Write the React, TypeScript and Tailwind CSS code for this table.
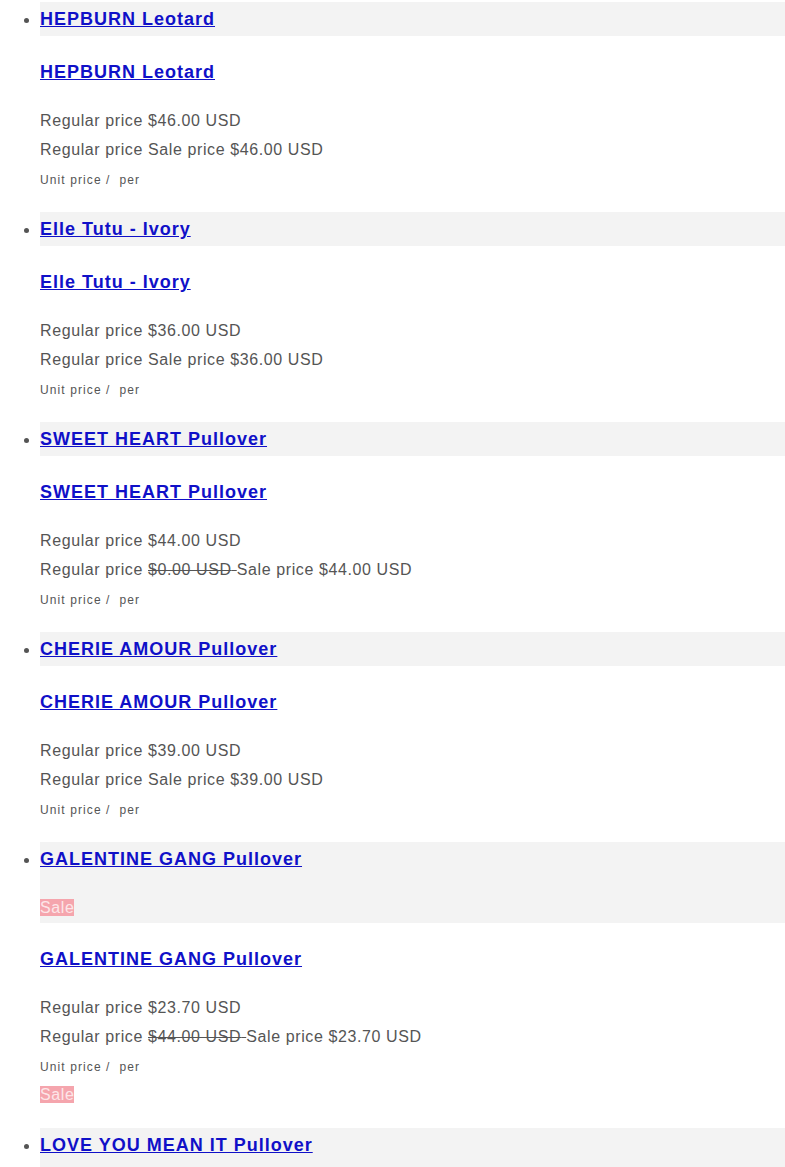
import React from 'react';

type Product = {
  name: string;
  price: string;
  compare?: string;
  sale?: boolean;
};

const products: Product[] = [
  { name: 'HEPBURN Leotard', price: '$46.00 USD' },
  { name: 'Elle Tutu - Ivory', price: '$36.00 USD' },
  { name: 'SWEET HEART Pullover', price: '$44.00 USD', compare: '$0.00 USD' },
  { name: 'CHERIE AMOUR Pullover', price: '$39.00 USD' },
  { name: 'GALENTINE GANG Pullover', price: '$23.70 USD', compare: '$44.00 USD', sale: true },
  { name: 'LOVE YOU MEAN IT Pullover', price: '$23.70 USD', compare: '$44.00 USD', sale: true },
];

const SaleBadge = () => (
  <span className="bg-[#f5a5ad] text-[#fde6e8]">Sale</span>
);

const ProductCard = ({ product }: { product: Product }) => {
  return (
    <li className={product.sale ? 'pb-[24px]' : 'pb-[23px]'}>
      <div className={product.sale ? 'bg-[#f3f3f3] pt-[5px] pb-[6px]' : 'bg-[#f3f3f3] pt-[5px] pb-[5px]'}>
        <h3 className="text-[18px] leading-[24px] font-bold tracking-[1px]">
          <a href="#" className="text-[#1010c8] underline">{product.name}</a>
        </h3>
        {product.sale && (
          <div className="mt-[28px] text-[16px] leading-[18px]">
            <SaleBadge />
          </div>
        )}
      </div>

      <h3 className="mt-[24px] text-[18px] leading-[24px] font-bold tracking-[1px]">
        <a href="#" className="text-[#1010c8] underline">{product.name}</a>
      </h3>

      <div className="mt-[25px] text-[16px] leading-[24px]">
        Regular price {product.price}
      </div>
      <div className="mt-[5px] text-[16px] leading-[24px]">
        Regular price {product.compare && <s>{product.compare} </s>}Sale price {product.price}
      </div>
      <div className="mt-[9px] text-[12px] leading-[18px] tracking-[1.1px]">
        Unit price / &nbsp;per
      </div>
      {product.sale && (
        <div className="mt-[10px] text-[16px] leading-[18px]">
          <SaleBadge />
        </div>
      )}
    </li>
  );
};

const App = () => {
  return (
    <div className="bg-white min-h-screen font-['Liberation_Sans',Arial,sans-serif] text-[#555] tracking-[0.6px]">
      <ul className="list-disc pl-10 pt-[2px] marker:text-[#555]">
        {products.map((p) => (
          <ProductCard key={p.name} product={p} />
        ))}
      </ul>
    </div>
  );
};

export default App;
